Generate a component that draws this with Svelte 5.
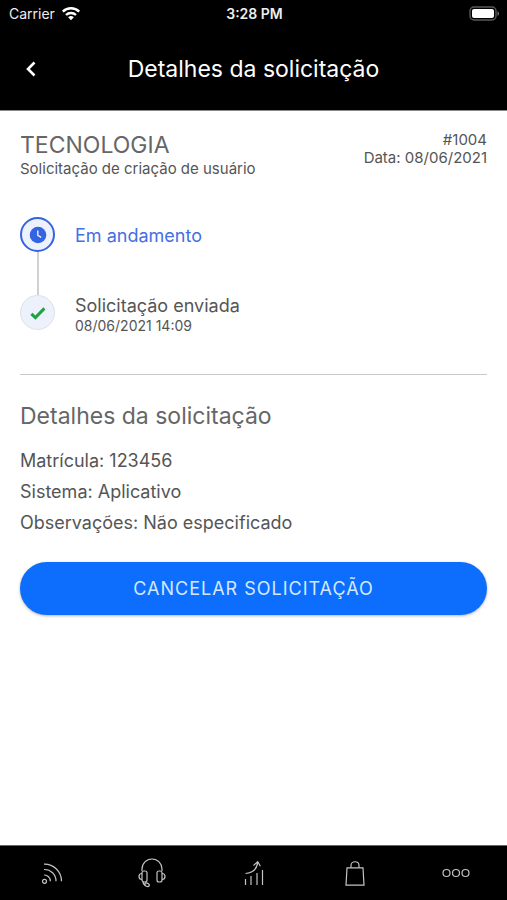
<script>
  const request = {
    area: "TECNOLOGIA",
    title: "Solicitação de criação de usuário",
    number: "#1004",
    date: "08/06/2021",
  };

  const steps = [
    { label: "Em andamento", date: "", active: true },
    { label: "Solicitação enviada", date: "08/06/2021 14:09", active: false },
  ];

  const details = [
    { name: "Matrícula", value: "123456" },
    { name: "Sistema", value: "Aplicativo" },
    { name: "Observações", value: "Não especificado" },
  ];

  const tabs = ["Novidades", "Atendimento", "Indicadores", "Loja", "Mais"];
</script>

<div class="screen">
  <div class="status-bar">
    <div class="carrier">
      <span>Carrier</span>
      <svg width="20" height="15" viewBox="0 0 20 15" fill="none" stroke="#fff" stroke-width="2.4">
        <path d="M1.8 5.6a11.7 11.7 0 0 1 16.4 0" />
        <path d="M5 9a7.2 7.2 0 0 1 10 0" />
        <path d="M10 14.2 7.1 11.3a4.2 4.2 0 0 1 5.8 0z" fill="#fff" stroke="none" />
      </svg>
    </div>
    <span class="time">3:28 PM</span>
    <div class="battery">
      <svg width="31" height="15" viewBox="0 0 31 15">
        <rect x="1" y="1" width="26" height="13" rx="4" fill="none" stroke="#59595b" stroke-width="1.4" />
        <rect x="3" y="3" width="22" height="9" rx="2" fill="#fff" />
        <path d="M28.5 5.2c2 .8 2 3.8 0 4.6z" fill="#77777a" />
      </svg>
    </div>
  </div>

  <header>
    <button class="back" aria-label="Voltar">
      <svg width="14" height="18" viewBox="0 0 14 18" fill="none" stroke="#fff" stroke-width="2.6">
        <path d="M10.5 2.5 4 9l6.5 6.5" />
      </svg>
    </button>
    <h1>Detalhes da solicitação</h1>
  </header>

  <main>
    <section class="summary">
      <div class="subject">
        <h2>{request.area}</h2>
        <p>{request.title}</p>
      </div>
      <div class="meta">
        <p>{request.number}</p>
        <p>Data: {request.date}</p>
      </div>
    </section>

    <ol class="timeline">
      {#each steps as step}
        <li class:active={step.active}>
          <span class="marker">
            {#if step.active}
              <svg width="18" height="18" viewBox="0 0 18 18">
                <circle cx="9" cy="9" r="8.3" fill="#3564e2" />
                <path d="M8.8 4.4v5l3.4 2" fill="none" stroke="#edf1fc" stroke-width="1.4" />
              </svg>
            {:else}
              <svg width="18" height="18" viewBox="0 0 18 18">
                <path d="m2.4 9.8 4 3.8 9-9.2" fill="none" stroke="#21a144" stroke-width="3" />
              </svg>
            {/if}
          </span>
          <div class="step">
            <p class="step-label">{step.label}</p>
            {#if step.date}
              <p class="step-date">{step.date}</p>
            {/if}
          </div>
        </li>
      {/each}
    </ol>

    <section class="details">
      <h2>Detalhes da solicitação</h2>
      {#each details as item}
        <p>{item.name}: {item.value}</p>
      {/each}
    </section>

    <button class="cancel">CANCELAR SOLICITAÇÃO</button>
  </main>

  <nav>
    {#each tabs as tab, i}
      <button aria-label={tab}>
        <svg width="30" height="32" viewBox="0 0 30 32" fill="none" stroke="#c4c4c4" stroke-width="1.2">
          {#if i === 0}
            <circle cx="8.5" cy="24.3" r="2" />
            <path d="M8 18a6 6 0 0 1 6.3 6.3M8 12.5A11.5 11.5 0 0 1 20 24.3M8 7.1a17 17 0 0 1 17.5 17.2" />
          {:else if i === 1}
            <path d="M5 14V12a10 10 0 0 1 20 0v2" />
            <rect x="5" y="14" width="5" height="11" rx="2" />
            <rect x="20" y="14" width="5" height="11" rx="2" />
            <path d="M5 16.5c-4 0-4 6 0 6M25 16.5c4 0 4 6 0 6M6 24.5c0 2.5 1 3.5 3 4" />
            <ellipse cx="10" cy="27.8" rx="2.4" ry="1.6" transform="rotate(25 10 27.8)" />
          {:else if i === 2}
            <path d="M6.5 28v-6M12 28v-9M18 28V16M23.5 28V13" />
            <path d="M6.5 16.5c7-.4 11.2-4 12.2-10.8M14.5 8.5l4.2-3.7 2.7 4.5" />
          {:else if i === 3}
            <path d="M7 10.8h16l1 17.4H6z" />
            <path d="M11 10.8V8.5c0-5 8-5 8 0v2.3" />
          {:else}
            <circle cx="5.5" cy="16" r="3.5" />
            <circle cx="15" cy="16" r="3.5" />
            <circle cx="24.5" cy="16" r="3.5" />
          {/if}
        </svg>
      </button>
    {/each}
  </nav>
</div>

<style>
  :global(body) {
    margin: 0;
    background: #fff;
  }

  .screen {
    display: flex;
    flex-direction: column;
    min-height: 100vh;
    font-family: Inter, "Open Sans", sans-serif;
    color: #555;
  }

  h1,
  h2,
  p,
  ol {
    margin: 0;
    padding: 0;
    font-weight: 400;
  }

  button {
    padding: 0;
    border: none;
    background: none;
    font-family: inherit;
    cursor: pointer;
  }

  svg {
    display: block;
  }

  .status-bar {
    display: grid;
    grid-template-columns: 1fr auto 1fr;
    align-items: center;
    height: 27px;
    padding: 0 7px 0 9px;
    background: #000;
    color: #eee;
    font-size: 14px;
  }

  .carrier {
    display: flex;
    align-items: center;
    gap: 6px;
  }

  .time {
    font-weight: 600;
  }

  .battery {
    justify-self: end;
  }

  header {
    display: grid;
    grid-template-columns: 48px 1fr 48px;
    align-items: center;
    height: 83px;
    background: #000;
    color: #fff;
    border-bottom: 1px solid #8a8a8a;
  }

  .back {
    display: flex;
    align-items: center;
    justify-content: flex-end;
    height: 48px;
    padding-right: 10px;
  }

  h1 {
    font-size: 23px;
    line-height: 28px;
    text-align: center;
  }

  main {
    flex: 1;
    padding: 20px;
  }

  .summary {
    display: flex;
    justify-content: space-between;
    font-size: 15px;
    line-height: 18px;
  }

  .subject {
    display: grid;
    gap: 1px;
  }

  h2 {
    font-size: 23px;
    line-height: 28px;
    color: #666;
  }

  .meta {
    text-align: right;
  }

  .timeline {
    margin-top: 39px;
    padding-bottom: 39px;
    border-bottom: 1px solid #c8c8c8;
    list-style: none;
  }

  .timeline li {
    display: flex;
    align-items: flex-start;
    gap: 20px;
  }

  .marker {
    box-sizing: border-box;
    display: flex;
    align-items: center;
    justify-content: center;
    width: 35px;
    height: 35px;
    border: 1px solid #dfe1e6;
    border-radius: 50%;
    background: #edf1fb;
  }

  .active .marker {
    border: 2px solid #3564e2;
  }

  /* connector down to the next step */
  .timeline li:not(:last-child) {
    position: relative;
    min-height: 78px;
  }

  .timeline li:not(:last-child)::after {
    content: "";
    position: absolute;
    top: 35px;
    bottom: 0;
    left: 17px;
    width: 2px;
    background: #d0d0d0;
  }

  .step-label {
    font-size: 18px;
    line-height: 22px;
  }

  .step-date {
    font-size: 14px;
    line-height: 18px;
  }

  .active .step {
    padding-top: 8px;
    color: #4470e3;
  }

  .details {
    padding: 27px 0 24px;
  }

  .details h2 {
    margin-bottom: 15px;
  }

  .details p {
    font-size: 18px;
    line-height: 31px;
  }

  .cancel {
    width: 100%;
    height: 53px;
    border-radius: 27px;
    background: #0d6efd;
    box-shadow: 0 1px 3px rgba(0, 0, 0, 0.3);
    color: #d3e9ff;
    font-size: 18px;
    letter-spacing: 1px;
  }

  nav {
    display: flex;
    height: 54px;
    background: #000;
    border-top: 1px solid #666;
  }

  nav button {
    flex: 1;
    display: flex;
    align-items: center;
    justify-content: center;
  }
</style>
